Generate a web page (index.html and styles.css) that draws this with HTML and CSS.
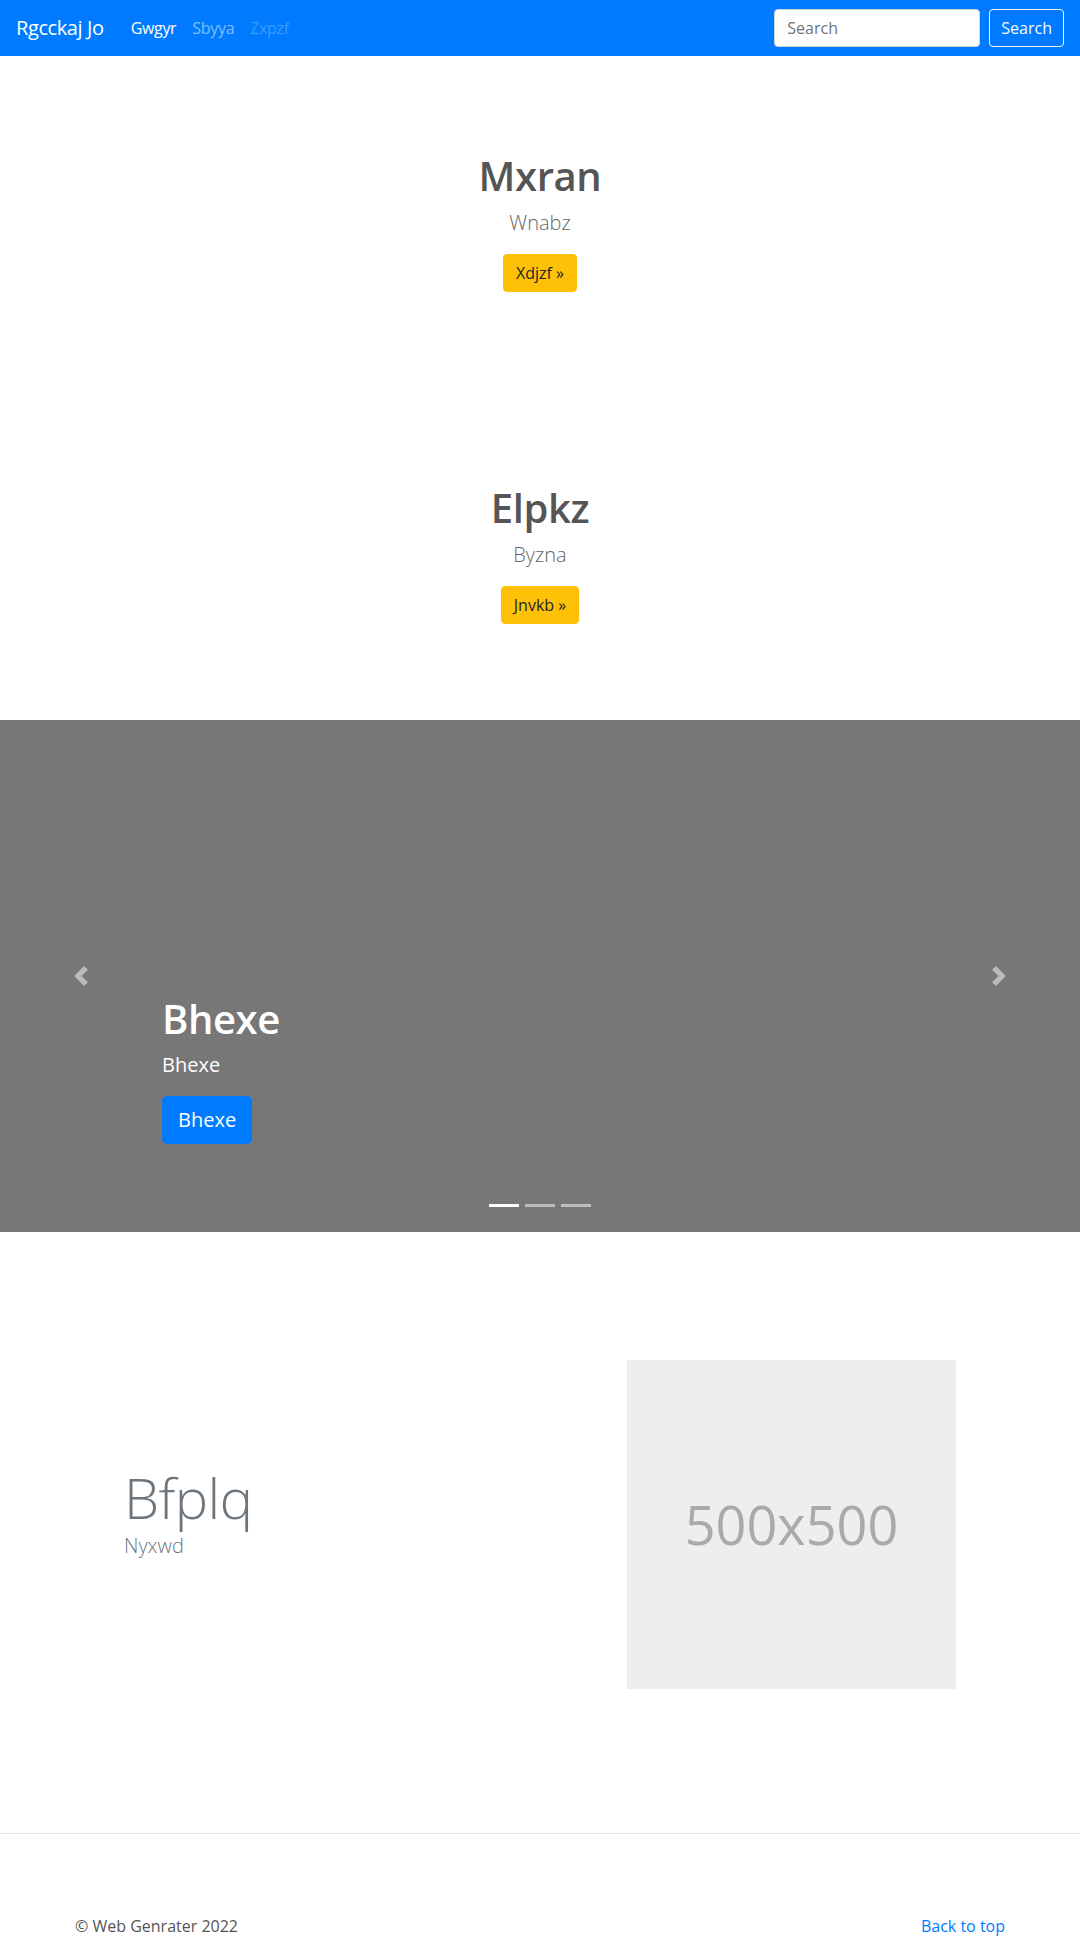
FILE: index.html
```html
<!DOCTYPE html>
<html lang="en">
<head>
<meta charset="utf-8">
<title>Rgcckaj Jo</title>
<link rel="stylesheet" href="styles.css">
</head>
<body>
<header class="navbar">
  <div class="navbar-left">
    <a class="brand" href="#">Rgcckaj Jo</a>
    <nav class="nav">
      <a class="nav-link active" href="#">Gwgyr</a>
      <a class="nav-link" href="#">Sbyya</a>
      <a class="nav-link disabled" href="#">Zxpzf</a>
    </nav>
  </div>
  <form class="search">
    <input class="search-input" type="text" placeholder="Search">
    <button class="btn-outline" type="button">Search</button>
  </form>
</header>

<main>
  <section class="hero">
    <h1 class="hero-title">Mxran</h1>
    <p class="hero-lead">Wnabz</p>
    <a class="btn-warning" href="#">Xdjzf &raquo;</a>
  </section>

  <section class="hero">
    <h1 class="hero-title">Elpkz</h1>
    <p class="hero-lead">Byzna</p>
    <a class="btn-warning" href="#">Jnvkb &raquo;</a>
  </section>

  <section class="carousel">
    <a class="carousel-control prev" href="#">
      <svg width="20" height="20" viewBox="0 0 8 8"><path fill="#fff" d="M5.25 0l-4 4 4 4 1.5-1.5L4.25 4l2.5-2.5L5.25 0z"/></svg>
    </a>
    <div class="carousel-caption">
      <h1 class="caption-title">Bhexe</h1>
      <p class="caption-text">Bhexe</p>
      <a class="btn-primary-lg" href="#">Bhexe</a>
    </div>
    <a class="carousel-control next" href="#">
      <svg width="20" height="20" viewBox="0 0 8 8"><path fill="#fff" d="M2.75 0l-1.5 1.5L3.75 4l-2.5 2.5L2.75 8l4-4-4-4z"/></svg>
    </a>
    <ol class="indicators">
      <li class="indicator active"></li>
      <li class="indicator"></li>
      <li class="indicator"></li>
    </ol>
  </section>

  <section class="feature">
    <div class="feature-text">
      <h2 class="feature-title">Bfplq</h2>
      <p class="feature-lead">Nyxwd</p>
    </div>
    <div class="feature-media">
      <div class="placeholder">500x500</div>
    </div>
  </section>
</main>

<footer class="footer">
  <div class="footer-inner">
    <p class="footer-copy">&copy; Web Genrater 2022</p>
    <a class="footer-link" href="#">Back to top</a>
  </div>
</footer>
</body>
</html>
```

FILE: styles.css
```css
* { box-sizing: border-box; }

body {
  margin: 0;
  font-family: "Segoe UI", "Open Sans", "Noto Sans", sans-serif;
  font-size: 16px;
  line-height: 1.5;
  color: #212529;
  background: #fff;
}

a { text-decoration: none; }

/* Navbar */
.navbar {
  display: flex;
  align-items: center;
  justify-content: space-between;
  height: 56px;
  padding: 8px 16px;
  background: #007bff;
}
.navbar-left {
  display: flex;
  align-items: center;
}
.brand {
  font-size: 20px;
  line-height: 30px;
  padding: 5px 0;
  margin-right: 19px;
  color: #fff;
  letter-spacing: -0.02em;
}
.nav { display: flex; }
.nav-link {
  padding: 8px 8px;
  color: rgba(255,255,255,.5);
  letter-spacing: -0.02em;
}
.nav-link.active { color: #fff; }
.nav-link.disabled { color: rgba(255,255,255,.25); }

.search {
  display: flex;
  align-items: center;
  gap: 9px;
  margin: 0;
}
.search-input {
  width: 206px;
  height: 38px;
  padding: 6px 12px;
  font: inherit;
  color: #495057;
  background: #fff;
  border: 1px solid #ced4da;
  border-radius: 4px;
}
.search-input::placeholder { color: #6c757d; }
.btn-outline {
  height: 38px;
  padding: 6px 11px;
  font: inherit;
  color: #f8f9fa;
  background: transparent;
  border: 1px solid #f8f9fa;
  border-radius: 4px;
}

/* Hero */
.hero {
  display: flex;
  flex-direction: column;
  align-items: center;
  padding: 96px 16px;
  text-align: center;
}
.hero-title {
  margin: 0 0 8px;
  font-size: 40px;
  font-weight: 600;
  line-height: 1.2;
  color: #555;
  letter-spacing: -0.01em;
}
.hero-lead {
  margin: 0 0 16px;
  font-size: 20px;
  font-weight: 300;
  line-height: 30px;
  color: #666;
}
.btn-warning {
  display: inline-block;
  padding: 6px 12px;
  font-size: 16px;
  line-height: 24px;
  color: #212529;
  background: #ffc107;
  border: 1px solid #ffc107;
  border-radius: 4px;
}

/* Carousel */
.carousel {
  position: relative;
  height: 512px;
  background: #777;
}
.carousel-control {
  position: absolute;
  top: 0;
  bottom: 0;
  width: 15%;
  display: flex;
  align-items: center;
  justify-content: center;
  opacity: .5;
}
.carousel-control.prev { left: 0; }
.carousel-control.next { right: 0; }
.carousel-caption {
  position: absolute;
  left: 15%;
  right: 15%;
  bottom: 52px;
  padding: 20px 0;
  display: flex;
  flex-direction: column;
  align-items: flex-start;
  color: #fff;
}
.caption-title {
  margin: 0 0 7px;
  font-size: 40px;
  font-weight: 600;
  line-height: 1.2;
  letter-spacing: -0.01em;
}
.caption-text {
  margin: 0 0 16px;
  font-size: 20px;
  line-height: 30px;
}
.btn-primary-lg {
  display: inline-block;
  margin-bottom: 16px;
  padding: 8px 15px;
  font-size: 20px;
  line-height: 30px;
  color: #fff;
  background: #007bff;
  border: 1px solid #007bff;
  border-radius: 5px;
}
.indicators {
  position: absolute;
  left: 0;
  right: 0;
  bottom: 25px;
  display: flex;
  justify-content: center;
  margin: 0;
  padding: 0;
  list-style: none;
}
.indicator {
  width: 30px;
  height: 3px;
  margin: 0 3px;
  background: rgba(255,255,255,.5);
}
.indicator.active { background: #fff; }

/* Feature */
.feature {
  display: grid;
  grid-template-columns: 1fr 1fr;
  align-items: center;
  max-width: 960px;
  margin: 0 auto;
  padding: 128px 0 144px;
}
.feature-text {
  padding-left: 64px;
  padding-bottom: 8px;
}
.feature-title {
  margin: 0;
  font-size: 56px;
  font-weight: 300;
  line-height: 1.2;
  color: #6c757d;
  letter-spacing: -0.01em;
}
.feature-lead {
  margin: 0 0 16px;
  font-size: 20px;
  font-weight: 300;
  line-height: 30px;
  color: #6c757d;
}
.feature-media { padding-left: 87px; }
.placeholder {
  width: 329px;
  height: 329px;
  display: flex;
  align-items: center;
  justify-content: center;
  background: #eee;
  color: #aaa;
  font-size: 54px;
}

/* Footer */
.footer {
  border-top: 1px solid #e5e5e5;
}
.footer-inner {
  max-width: 960px;
  margin: 0 auto;
  padding: 80px 15px 0;
  display: flex;
  justify-content: space-between;
}
.footer-copy {
  margin: 0 0 16px;
  color: #555;
}
.footer-link { color: #007bff; }
```
